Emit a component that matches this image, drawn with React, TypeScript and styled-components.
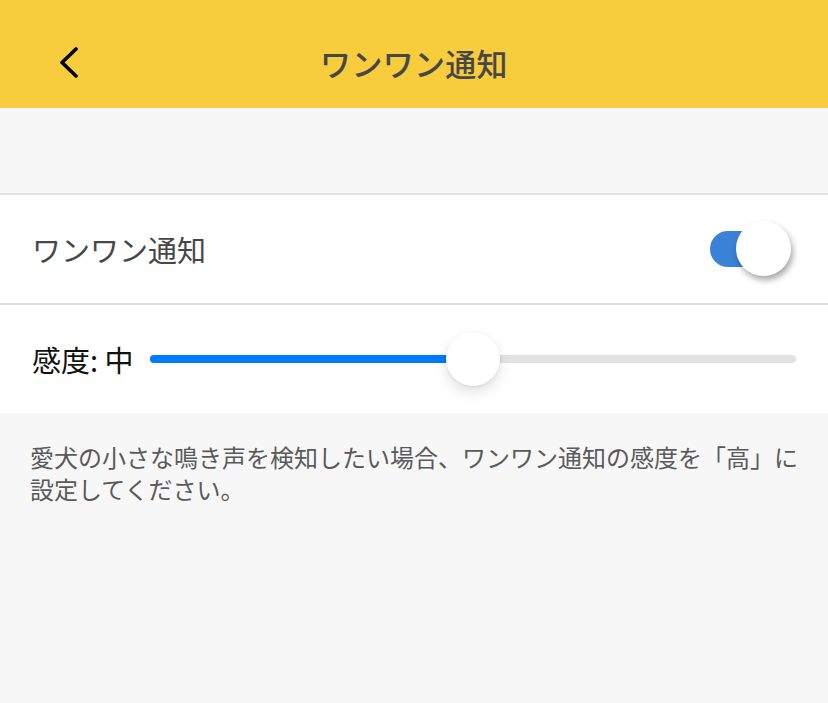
import React from 'react';
import styled, { createGlobalStyle } from 'styled-components';

const GlobalStyle = createGlobalStyle`
  html, body {
    margin: 0;
    padding: 0;
    background: #f7f7f7;
  }
  body {
    font-family: 'Noto Sans CJK JP', 'Noto Sans', sans-serif;
  }
`;

const Page = styled.div`
  width: 828px;
  height: 703px;
  background: #f7f7f7;
  display: flex;
  flex-direction: column;
  overflow: hidden;
`;

const Header = styled.header`
  height: 108px;
  box-sizing: border-box;
  padding-top: 16px;
  background: #f7cc3d;
  display: grid;
  grid-template-columns: 120px 1fr 120px;
  align-items: center;
`;

const BackButton = styled.button`
  border: none;
  background: transparent;
  padding: 0 0 0 58px;
  display: flex;
  align-items: center;
  height: 40px;
  cursor: pointer;
`;

const HeaderTitle = styled.h1`
  margin: 0;
  text-align: center;
  font-size: 31px;
  font-weight: 500;
  color: #474747;
  letter-spacing: 0.3px;
`;

const Spacer = styled.div`
  height: 85px;
`;

const Group = styled.section`
  background: #ffffff;
  border-top: 2px solid #e1e1e1;
`;

const Row = styled.div<{ $divider?: boolean }>`
  height: 108px;
  display: flex;
  align-items: center;
  padding: 0 32px;
  border-bottom: ${(p) => (p.$divider ? '2px solid #e1e1e1' : 'none')};
  gap: 16px;
`;

const RowLabel = styled.span`
  flex: 1;
  font-size: 29px;
  color: #474747;
`;

const SwitchTrack = styled.div`
  position: relative;
  width: 76px;
  height: 36px;
  border-radius: 18px;
  background: #3a82d6;
  margin-right: 10px;
`;

const SwitchKnob = styled.div`
  position: absolute;
  right: -5px;
  top: -10px;
  width: 55px;
  height: 55px;
  border-radius: 50%;
  background: #ffffff;
  box-shadow: 2px 4px 6px rgba(0, 0, 0, 0.35);
`;

const SliderLabel = styled.span`
  font-size: 29px;
  color: #111111;
  white-space: nowrap;
`;

const SliderTrack = styled.div`
  position: relative;
  flex: 1;
  height: 8px;
  border-radius: 4px;
  background: #e3e3e5;
`;

const SliderFill = styled.div`
  height: 100%;
  border-radius: 4px 0 0 4px;
  background: #007aff;
`;

const SliderThumb = styled.div`
  position: absolute;
  top: 50%;
  width: 54px;
  height: 54px;
  border-radius: 50%;
  background: #ffffff;
  transform: translate(-50%, -50%);
  box-shadow: 0 6px 14px rgba(0, 0, 0, 0.12), 0 1px 3px rgba(0, 0, 0, 0.08);
`;

const Note = styled.p`
  margin: 0;
  padding: 28px 28px 0 30px;
  font-size: 24px;
  line-height: 32px;
  color: #5a5a5a;
`;

const ChevronLeft = () => (
  <svg width="22" height="32" viewBox="0 0 22 32" fill="none">
    <path d="M18 3 L4 16.5 L18 30" stroke="#000" strokeWidth="3.6" strokeLinecap="round" strokeLinejoin="round" />
  </svg>
);

export default function App() {
  const sensitivity = 50;

  return (
    <Page>
      <GlobalStyle />
      <Header>
        <BackButton aria-label="戻る">
          <ChevronLeft />
        </BackButton>
        <HeaderTitle>ワンワン通知</HeaderTitle>
        <div />
      </Header>
      <Spacer />
      <Group>
        <Row $divider>
          <RowLabel>ワンワン通知</RowLabel>
          <SwitchTrack>
            <SwitchKnob />
          </SwitchTrack>
        </Row>
        <Row>
          <SliderLabel>感度: 中</SliderLabel>
          <SliderTrack>
            <SliderFill style={{ width: `${sensitivity}%` }} />
            <SliderThumb style={{ left: `${sensitivity}%` }} />
          </SliderTrack>
        </Row>
      </Group>
      <Note>
        愛犬の小さな鳴き声を検知したい場合、ワンワン通知の感度を「高」に設定してください。
      </Note>
    </Page>
  );
}
